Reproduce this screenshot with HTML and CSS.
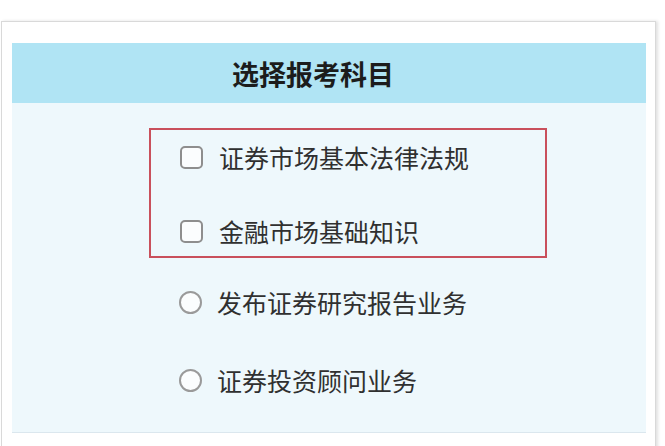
FILE: index.html
```html
<!DOCTYPE html>
<html lang="zh-CN">
<head>
<meta charset="utf-8">
<title>选择报考科目</title>
<link rel="stylesheet" href="styles.css">
</head>
<body>
<div class="card">
  <div class="panel">
    <div class="panel-head">选择报考科目</div>
    <div class="panel-body">
      <div class="list">
        <div class="highlight">
          <label class="item"><span class="box"></span><span class="label">证券市场基本法律法规</span></label>
          <label class="item"><span class="box"></span><span class="label">金融市场基础知识</span></label>
        </div>
        <div class="radios">
          <label class="item"><span class="radio"></span><span class="label">发布证券研究报告业务</span></label>
          <label class="item"><span class="radio"></span><span class="label">证券投资顾问业务</span></label>
        </div>
      </div>
    </div>
  </div>
</div>
</body>
</html>
```
FILE: styles.css
```css
html, body {
  margin: 0;
  padding: 0;
  background: #ffffff;
  font-family: "Noto Sans CJK SC", "Noto Sans", sans-serif;
}
body {
  height: 446px;
  overflow: hidden;
}
.card {
  margin: 21px 0 0 1px;
  width: 655px;
  height: 440px;
  border: 1px solid #d9d9d9;
  box-shadow: 2px 0 3px rgba(0, 0, 0, 0.12);
  background: #ffffff;
  padding: 21px 9px 0 10px;
  box-sizing: border-box;
}
.panel {
  display: flex;
  flex-direction: column;
}
.panel-head {
  height: 60px;
  background: #b0e4f4;
  display: flex;
  align-items: center;
  justify-content: center;
  padding-right: 32px;
  font-size: 27px;
  font-weight: 700;
  color: #1c1c1c;
}
.panel-body {
  background: #eef8fc;
  border-bottom: 1px solid #dbe7ee;
  padding: 25px 0 27px 137px;
}
.list {
  width: 398px;
  display: flex;
  flex-direction: column;
}
.highlight {
  border: 2px solid #c9505c;
  padding-top: 2px;
  display: flex;
  flex-direction: column;
  gap: 24px;
}
.radios {
  padding-top: 19px;
  display: flex;
  flex-direction: column;
  gap: 28px;
}
.item {
  height: 50px;
  display: flex;
  align-items: center;
  padding-left: 29px;
}
.radios .item {
  padding-left: 30px;
}
.box {
  width: 19px;
  height: 19px;
  border: 2px solid #8e8e8e;
  border-radius: 5px;
  background: #fbfdfe;
  flex: none;
}
.radio {
  width: 19px;
  height: 19px;
  border: 2px solid #9a9a9a;
  border-radius: 50%;
  background: #fbfdfe;
  flex: none;
}
.label {
  margin-left: 16px;
  font-size: 25px;
  color: #303030;
  line-height: 1;
}
.radios .label {
  margin-left: 15px;
}
```
